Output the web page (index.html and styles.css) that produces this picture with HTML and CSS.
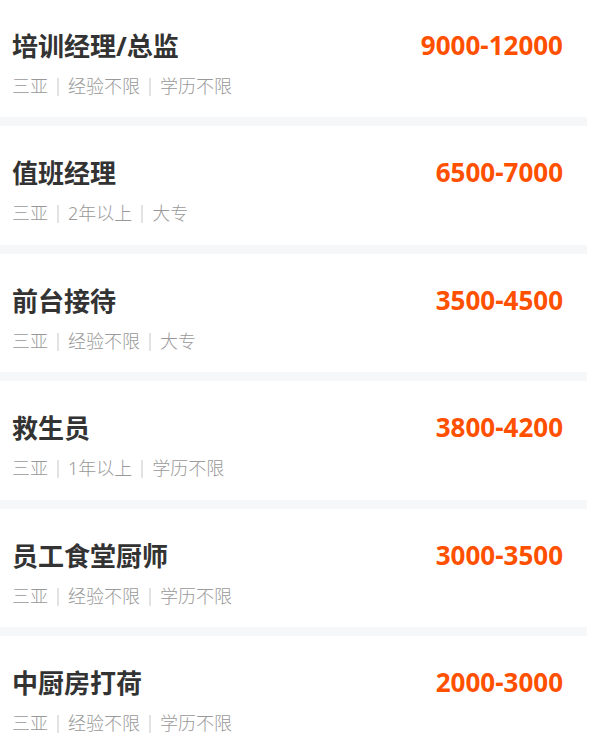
FILE: index.html
```html
<!DOCTYPE html>
<html lang="zh-Hans">
<head>
  <meta charset="UTF-8">
  <meta name="viewport" content="width=device-width, initial-scale=1.0">
  <title>职位列表</title>
  <link rel="stylesheet" href="styles.css">
</head>
<body>

<div class="job-list">
  <div class="job-item">
    <div class="job-top">
      <span class="job-name">培训经理/总监</span>
      <span class="job-salary">9000-12000</span>
    </div>
    <div class="job-tags">三亚<i class="sep"></i>经验不限<i class="sep"></i>学历不限</div>
  </div>

  <div class="job-item">
    <div class="job-top">
      <span class="job-name">值班经理</span>
      <span class="job-salary">6500-7000</span>
    </div>
    <div class="job-tags">三亚<i class="sep"></i>2年以上<i class="sep"></i>大专</div>
  </div>

  <div class="job-item">
    <div class="job-top">
      <span class="job-name">前台接待</span>
      <span class="job-salary">3500-4500</span>
    </div>
    <div class="job-tags">三亚<i class="sep"></i>经验不限<i class="sep"></i>大专</div>
  </div>

  <div class="job-item">
    <div class="job-top">
      <span class="job-name">救生员</span>
      <span class="job-salary">3800-4200</span>
    </div>
    <div class="job-tags">三亚<i class="sep"></i>1年以上<i class="sep"></i>学历不限</div>
  </div>

  <div class="job-item">
    <div class="job-top">
      <span class="job-name">员工食堂厨师</span>
      <span class="job-salary">3000-3500</span>
    </div>
    <div class="job-tags">三亚<i class="sep"></i>经验不限<i class="sep"></i>学历不限</div>
  </div>

  <div class="job-item">
    <div class="job-top">
      <span class="job-name">中厨房打荷</span>
      <span class="job-salary">2000-3000</span>
    </div>
    <div class="job-tags">三亚<i class="sep"></i>经验不限<i class="sep"></i>学历不限</div>
  </div>
</div>

</body>
</html>
```

FILE: styles.css
```css
body {
  margin: 0;
  background: #fff;
  font-family: "Noto Sans", "Noto Sans CJK SC", sans-serif;
}
.job-list {
  width: 587px;
  margin-top: -1.5px;
  background: #f6f7f9;
}
.job-item {
  background: #fff;
  padding: 30px 24px 19.5px 12px;
  margin-bottom: 9px;
}
.job-top {
  display: flex;
  justify-content: space-between;
  align-items: center;
  height: 32px;
}
.job-name {
  font-size: 26px;
  font-weight: bold;
  color: #333;
}
.job-salary {
  font-size: 26px;
  font-weight: bold;
  color: #ff5000;
}
.job-tags {
  margin-top: 13px;
  height: 24px;
  line-height: 24px;
  font-size: 18px;
  font-weight: 300;
  color: #999;
}
.sep {
  display: inline-block;
  width: 2px;
  height: 18px;
  margin: 0 9px;
  background: #e3e3e3;
  vertical-align: -3px;
}
```
